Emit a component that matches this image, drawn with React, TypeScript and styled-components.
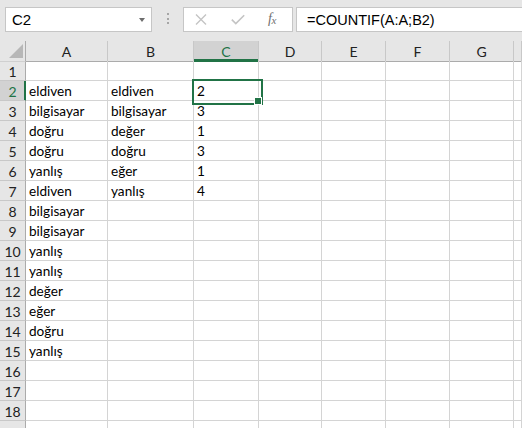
import React from "react";
import styled, { createGlobalStyle } from "styled-components";

const GlobalStyle = createGlobalStyle`
  html, body {
    margin: 0;
    padding: 0;
    background: #ffffff;
    overflow: hidden;
  }
  * {
    box-sizing: border-box;
  }
`;

const GREEN = "#217346";

const Window = styled.div`
  width: 522px;
  height: 428px;
  overflow: hidden;
  background: #ffffff;
`;

const Toolbar = styled.div`
  height: 41px;
  background: #e6e6e6;
  display: flex;
  align-items: flex-start;
  padding: 7px 0 0 5px;
  overflow: hidden;
`;

const NameBox = styled.div`
  width: 147px;
  height: 25px;
  background: #ffffff;
  border: 1px solid #c6c6c6;
  display: flex;
  align-items: center;
  justify-content: space-between;
  padding: 0 6px 0 6px;
  font-family: "Liberation Sans", Arial, sans-serif;
  font-size: 15px;
  color: #000;
`;

const DropArrow = styled.span`
  width: 0;
  height: 0;
  border-left: 3.5px solid transparent;
  border-right: 3.5px solid transparent;
  border-top: 4px solid #6d6d6d;
  margin-top: 1px;
`;

const Grip = styled.div`
  width: 31px;
  height: 25px;
  display: flex;
  flex-direction: column;
  align-items: center;
  justify-content: center;
  gap: 2.5px;
  padding-bottom: 2px;
`;

const GripDot = styled.span`
  width: 2px;
  height: 2px;
  background: #a6a6a6;
`;

const FormulaButtons = styled.div`
  width: 110px;
  height: 25px;
  background: #ffffff;
  border: 1px solid #c6c6c6;
  display: flex;
  align-items: center;
  padding-left: 11px;
`;

const IconSlot = styled.span<{ $width: number }>`
  width: ${(p) => p.$width}px;
  height: 23px;
  display: flex;
  align-items: center;
`;

const Fx = styled.span`
  font-family: "Liberation Serif", "Times New Roman", serif;
  font-style: italic;
  font-size: 14px;
  color: #707070;
  letter-spacing: -0.5px;
  margin-top: -2px;

  sub {
    font-size: 11px;
    vertical-align: -1px;
  }
`;

const FormulaInput = styled.div`
  flex: 1;
  height: 25px;
  margin-left: 3px;
  margin-right: -3px;
  background: #ffffff;
  border: 1px solid #c6c6c6;
  display: flex;
  align-items: center;
  padding-left: 10px;
  font-family: "Liberation Sans", Arial, sans-serif;
  font-size: 14.5px;
  color: #000;
`;

const Sheet = styled.div`
  display: grid;
  grid-template-columns: 26px 82px 86px 65px 63px 64px 64px 64px 1fr;
  grid-auto-rows: 20px;
  font-family: Lato, "Noto Sans", sans-serif;
`;

const Corner = styled.div`
  height: 21px;
  background: #e6e6e6;
  border-right: 1px solid #ababab;
  border-bottom: 1px solid #d0d0d0;
  position: relative;

  &::after {
    content: "";
    position: absolute;
    right: 2px;
    bottom: 3px;
    width: 0;
    height: 0;
    border-left: 14px solid transparent;
    border-bottom: 14px solid #b7b7b7;
  }
`;

const ColHeader = styled.div<{ $selected?: boolean }>`
  height: 21px;
  background: ${(p) => (p.$selected ? "#d2d2d2" : "#e6e6e6")};
  border-right: 1px solid #c8c8c8;
  border-bottom: 1px solid ${(p) => (p.$selected ? GREEN : "#ababab")};
  box-shadow: ${(p) => (p.$selected ? `inset 0 -2px 0 ${GREEN}` : "none")};
  display: flex;
  align-items: center;
  justify-content: center;
  padding-top: 1px;
  font-size: 14px;
  color: ${(p) => (p.$selected ? GREEN : "#222")};
`;

const RowHeader = styled.div<{ $selected?: boolean }>`
  background: ${(p) => (p.$selected ? "#d2d2d2" : "#e6e6e6")};
  border-right: 1px solid ${(p) => (p.$selected ? GREEN : "#ababab")};
  border-bottom: 1px solid #c8c8c8;
  box-shadow: ${(p) => (p.$selected ? `inset -1px 0 0 ${GREEN}` : "none")};
  display: flex;
  align-items: center;
  justify-content: center;
  padding-top: 1px;
  font-size: 14px;
  color: ${(p) => (p.$selected ? GREEN : "#222")};
`;

const Cell = styled.div<{ $active?: boolean }>`
  position: relative;
  border-right: 1px solid #d4d4d4;
  border-bottom: 1px solid #d4d4d4;
  padding: 1px 0 0 3px;
  line-height: 18px;
  font-size: 13.6px;
  color: #000;
  white-space: nowrap;

  ${(p) =>
    p.$active &&
    `
    z-index: 2;
    &::before {
      content: "";
      position: absolute;
      left: -2px;
      top: -2px;
      width: 67px;
      height: 22px;
      border: 2px solid ${GREEN};
      pointer-events: none;
    }
    &::after {
      content: "";
      position: absolute;
      left: 60px;
      top: 16px;
      width: 6px;
      height: 6px;
      background: ${GREEN};
      border: 1px solid #ffffff;
    }
  `}
`;

// H is only a sliver at the right edge, its letter lies off screen
const columns = ["A", "B", "C", "D", "E", "F", "G", ""];

const colA = [
  "",
  "eldiven",
  "bilgisayar",
  "doğru",
  "doğru",
  "yanlış",
  "eldiven",
  "bilgisayar",
  "bilgisayar",
  "yanlış",
  "yanlış",
  "değer",
  "eğer",
  "doğru",
  "yanlış",
];
const colB = ["", "eldiven", "bilgisayar", "değer", "doğru", "eğer", "yanlış"];
const colC = ["", "2", "3", "1", "3", "1", "4"];

const VISIBLE_ROWS = 18;

const CloseIcon = () => (
  <svg width="12" height="11" viewBox="0 0 12 11">
    <path d="M1 0.5 L11 10.5 M11 0.5 L1 10.5" stroke="#c4c4c4" strokeWidth="1.4" fill="none" />
  </svg>
);

const CheckIcon = () => (
  <svg width="14" height="11" viewBox="0 0 14 11">
    <path d="M0.8 5.6 L4.8 9.6 L13.2 1.2" stroke="#c4c4c4" strokeWidth="1.6" fill="none" />
  </svg>
);

export default function App() {
  const rows = Array.from({ length: VISIBLE_ROWS + 1 }, (_, i) => i + 1);

  return (
    <Window>
      <GlobalStyle />
      <Toolbar>
        <NameBox>
          <span>C2</span>
          <DropArrow />
        </NameBox>
        <Grip>
          <GripDot />
          <GripDot />
          <GripDot />
        </Grip>
        <FormulaButtons>
          <IconSlot $width={36}>
            <CloseIcon />
          </IconSlot>
          <IconSlot $width={37}>
            <CheckIcon />
          </IconSlot>
          <IconSlot $width={20}>
            <Fx>
              f<sub>x</sub>
            </Fx>
          </IconSlot>
        </FormulaButtons>
        <FormulaInput>=COUNTIF(A:A;B2)</FormulaInput>
      </Toolbar>

      <Sheet>
        <Corner />
        {columns.map((c, i) => (
          <ColHeader key={i} $selected={c === "C"}>
            {c}
          </ColHeader>
        ))}

        {rows.map((r) => (
          <React.Fragment key={r}>
            <RowHeader $selected={r === 2}>{r <= VISIBLE_ROWS ? r : ""}</RowHeader>
            <Cell>{colA[r - 1] ?? ""}</Cell>
            <Cell>{colB[r - 1] ?? ""}</Cell>
            <Cell $active={r === 2}>{colC[r - 1] ?? ""}</Cell>
            <Cell />
            <Cell />
            <Cell />
            <Cell />
            <Cell />
          </React.Fragment>
        ))}
      </Sheet>
    </Window>
  );
}
